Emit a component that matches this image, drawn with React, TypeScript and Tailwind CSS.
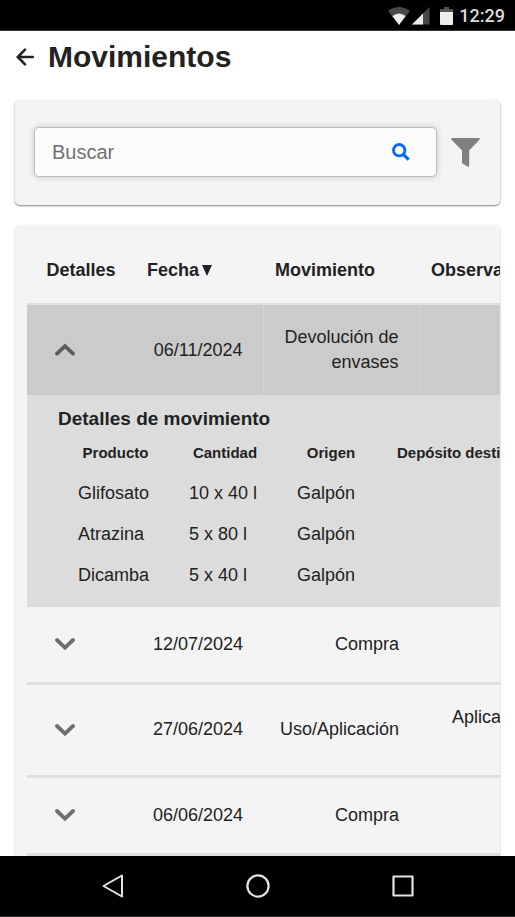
import React, { useState } from "react";

type Product = { name: string; amount: string; origin: string; target: string };
type Movement = {
  date: string;
  kind: string;
  notes: string[];
  products: Product[];
};

const movements: Movement[] = [
  {
    date: "06/11/2024",
    kind: "Devolución de envases",
    notes: [],
    products: [
      { name: "Glifosato", amount: "10 x 40 l", origin: "Galpón", target: "" },
      { name: "Atrazina", amount: "5 x 80 l", origin: "Galpón", target: "" },
      { name: "Dicamba", amount: "5 x 40 l", origin: "Galpón", target: "" },
    ],
  },
  { date: "12/07/2024", kind: "Compra", notes: [], products: [] },
  { date: "27/06/2024", kind: "Uso/Aplicación", notes: ["Aplicación en", "lote"], products: [] },
  { date: "06/06/2024", kind: "Compra", notes: [], products: [] },
];

function StatusBar() {
  return (
    <div className="flex h-[31px] shrink-0 items-center justify-end border-b border-[#333] bg-black pr-[10px] pt-px">
      <svg className="h-[18px] w-[22px]" viewBox="0 0 22 18" aria-hidden="true">
        <path d="M0 4Q11-4 22 4L11 18Z" fill="#484848" />
        <path d="M4.4 9Q11 4 17.600 9L11 18Z" fill="#ededed" />
      </svg>
      <svg className="ml-[2px] h-[18px] w-[18px]" viewBox="0 0 18 18" aria-hidden="true">
        <path d="M17.500 0V17.500H0Z" fill="#484848" />
        <path d="M11 6.500V17.500H0Z" fill="#ededed" />
      </svg>
      <svg className="ml-[10px] h-[18px] w-[13px]" viewBox="0 0 13 18" aria-hidden="true">
        <path d="M4 0H9V2H12Q13 2 13 3V6H0V3Q0 2 1 2H4Z" fill="#555" />
        <path d="M0 5H13V17Q13 18 12 18H1Q0 18 0 17Z" fill="#ededed" />
      </svg>
      <span className="ml-[6px] font-['Roboto',sans-serif] text-[18px] font-medium leading-6 text-[#dcdcdc]">12:29</span>
    </div>
  );
}

function Chevron({ open }: { open: boolean }) {
  return (
    <svg className="h-[14px] w-5" viewBox="0 0 20 14" fill="none" strokeWidth="3.800" strokeLinecap="round" aria-hidden="true">
      {open ? (
        <path d="M2 10.600L10 3L18 10.600" stroke="#5c5c5c" />
      ) : (
        <path d="M2 3L10 10.600L18 3" stroke="#6e6e6e" />
      )}
    </svg>
  );
}

function ProductTable({ products }: { products: Product[] }) {
  return (
    <table className="w-full table-fixed border-collapse">
      <colgroup>
        <col className="w-[111px]" />
        <col className="w-[108px]" />
        <col className="w-[104px]" />
        <col />
      </colgroup>
      <thead>
        <tr className="h-10 border-b border-[#e1e1e1] text-[15px] leading-5">
          <th className="pl-1">Producto</th>
          <th className="pl-1">Cantidad</th>
          <th className="pl-1">Origen</th>
          <th className="whitespace-nowrap pl-4 text-left">Depósito destino</th>
        </tr>
      </thead>
      <tbody>
        {products.map((p) => (
          <tr key={p.name} className="h-[41px] border-b border-[#e1e1e1]">
            <td className="whitespace-nowrap pl-5">{p.name}</td>
            <td className="whitespace-nowrap pl-5">{p.amount}</td>
            <td className="whitespace-nowrap pl-5">{p.origin}</td>
            <td className="pl-5">{p.target}</td>
          </tr>
        ))}
      </tbody>
    </table>
  );
}

function MovementRow({ item, open, onToggle }: { item: Movement; open: boolean; onToggle: () => void }) {
  return (
    <>
      <tr className={open ? "bg-[#cbcbcb]" : "border-b-[3px] border-[#dfdfdf]"}>
        <td className="py-5 pl-5">
          <button
            type="button"
            aria-expanded={open}
            aria-label={`Detalles ${item.date}`}
            onClick={onToggle}
            className="flex h-[35px] w-9 items-center justify-center"
          >
            <Chevron open={open} />
          </button>
        </td>
        <td className="py-5 pr-5 text-right">{item.date}</td>
        <td className={open ? "border-x border-[#d6d6d6] py-5 pl-5 pr-5 text-right" : "py-5 pr-5 text-right"}>{item.kind}</td>
        <td className="py-5 pr-5 text-right">
          {item.notes.map((line) => (
            <span key={line} className="block">
              {line}
            </span>
          ))}
        </td>
      </tr>
      {open && (
        <tr className="bg-[#dcdcdc]">
          <td colSpan={4} className="pb-[10px] pl-[31px] pt-[10px]">
            <h2 className="text-[19px] font-bold leading-7">Detalles de movimiento</h2>
            <ProductTable products={item.products} />
          </td>
        </tr>
      )}
    </>
  );
}

export default function App() {
  const [openDate, setOpenDate] = useState<string | null>("06/11/2024");
  const [query, setQuery] = useState("");

  return (
    <div className="flex h-screen flex-col overflow-hidden bg-white font-['Liberation_Sans',Arial,sans-serif] text-[#222]">
      <StatusBar />

      <header className="flex h-[51px] shrink-0 items-center gap-[14px] pl-4">
        <button type="button" aria-label="Volver">
          <svg className="h-[18px] w-[18px]" viewBox="0 0 18 18" fill="none" stroke="#222" strokeWidth="2.600" strokeLinecap="round" aria-hidden="true">
            <path d="M16.800 9H2M9 1.700L1.800 9L9 16.300" />
          </svg>
        </button>
        <h1 className="text-[30px] font-bold leading-9">Movimientos</h1>
      </header>

      <main className="flex min-h-0 flex-1 flex-col gap-5 overflow-y-auto px-[15px] pt-[18px] [scrollbar-width:none]">
        <form
          role="search"
          onSubmit={(e) => e.preventDefault()}
          className="flex shrink-0 items-center gap-[14px] rounded-[5px] bg-[#f4f4f4] pb-7 pl-[19px] pr-5 pt-[27px] shadow-[0_1px_2px_rgba(0,0,0,0.5)]"
        >
          <div className="flex h-[50px] min-w-0 flex-1 items-center rounded-[5px] border border-[#bbb] bg-[#fcfcfc] pl-[17px] pr-[26px] shadow-[0_0_6px_rgba(0,0,0,0.2)]">
            <input
              type="text"
              aria-label="Buscar"
              placeholder="Buscar"
              value={query}
              onChange={(e) => setQuery(e.target.value)}
              className="min-w-0 flex-1 bg-transparent text-xl outline-none placeholder:text-[#707070]"
            />
            <button type="submit" aria-label="Iniciar búsqueda">
              <svg className="h-[18px] w-[18px]" viewBox="0 0 18 18" fill="none" stroke="#0866ff" aria-hidden="true">
                <circle cx="7.200" cy="7.200" r="5.700" strokeWidth="2.800" />
                <path d="M11.300 11.300L16.600 16.600" strokeWidth="3.200" />
              </svg>
            </button>
          </div>
          <button type="button" aria-label="Filtrar">
            <svg className="h-[29px] w-[29px]" viewBox="0 0 29 29" fill="#808080" aria-hidden="true">
              <path d="M.8 0H28.200Q29.300.6 28.400 1.800L18.200 12.500V28Q17.600 29.200 16.400 28.600L11.600 25.600Q11 25.200 11 24.500V12.500L.6 1.800Q-.3.700.8 0Z" />
            </svg>
          </button>
        </form>

        <section
          aria-label="Lista de movimientos"
          className="shrink-0 overflow-x-auto rounded-[5px] bg-[#f4f4f4] pb-3 pl-3 pt-3 shadow-[0_1px_2px_rgba(0,0,0,0.3)] [scrollbar-width:none]"
        >
          <table className="w-full min-w-[552px] table-fixed border-collapse text-lg leading-[25px]">
            <colgroup>
              <col className="w-[108px]" />
              <col className="w-[128px]" />
              <col className="w-[156px]" />
              <col />
            </colgroup>
            <thead>
              <tr className="h-[67px] border-b-2 border-[#dfdfdf]">
                <th>Detalles</th>
                <th className="pl-3 text-left" aria-sort="descending">
                  <button type="button" className="flex items-center gap-[3px] font-bold">
                    Fecha
                    <svg className="h-[11px] w-[10px]" viewBox="0 0 10 11" fill="#222" aria-hidden="true">
                      <path d="M0 0H10L5 11Z" />
                    </svg>
                  </button>
                </th>
                <th className="pl-3 text-left">Movimiento</th>
                <th className="pl-3 text-left">Observaciones</th>
              </tr>
            </thead>
            <tbody>
              {movements.map((item) => (
                <MovementRow
                  key={item.date}
                  item={item}
                  open={openDate === item.date}
                  onToggle={() => setOpenDate(openDate === item.date ? null : item.date)}
                />
              ))}
            </tbody>
          </table>
        </section>
      </main>

      <nav aria-label="Sistema" className="flex h-[61px] shrink-0 items-center border-b border-[#333] bg-black px-10">
        <button type="button" aria-label="Atrás" className="flex flex-1 justify-center">
          <svg className="h-6 w-6" viewBox="0 0 24 24" fill="none" stroke="#e4e4e4" strokeWidth="2" strokeLinejoin="round" aria-hidden="true">
            <path d="M21 1.500V22.500L2.500 12Z" />
          </svg>
        </button>
        <button type="button" aria-label="Inicio" className="flex flex-1 justify-center">
          <svg className="h-6 w-6" viewBox="0 0 24 24" fill="none" stroke="#e4e4e4" strokeWidth="2.200" aria-hidden="true">
            <circle cx="12" cy="12" r="10.600" />
          </svg>
        </button>
        <button type="button" aria-label="Recientes" className="flex flex-1 justify-center">
          <svg className="h-6 w-6" viewBox="0 0 24 24" fill="none" stroke="#e4e4e4" strokeWidth="2.200" strokeLinejoin="round" aria-hidden="true">
            <path d="M2.500 2.500H21.500V21.500H2.500Z" />
          </svg>
        </button>
      </nav>
    </div>
  );
}
